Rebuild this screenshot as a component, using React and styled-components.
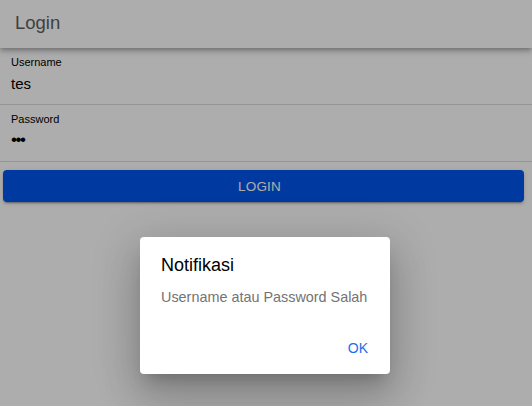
import React from "react";
import styled, { createGlobalStyle } from "styled-components";

const Global = createGlobalStyle`
  html, body { margin: 0; padding: 0; background: #fff; }
  body { font-family: "Liberation Sans", Arial, sans-serif; width: 532px; height: 406px; overflow: hidden; }
  #root { position: relative; height: 406px; }
`;

const Page = styled.div`
  display: flex;
  flex-direction: column;
  height: 406px;
  background: #fff;
`;

const Header = styled.header`
  height: 48px;
  display: flex;
  align-items: center;
  padding-left: 15px;
  background: #fff;
  box-shadow: 0 2px 4px -1px rgba(0,0,0,0.2), 0 4px 5px 0 rgba(0,0,0,0.14), 0 1px 10px 0 rgba(0,0,0,0.12);
  position: relative;
  z-index: 1;
`;

const Title = styled.h1`
  margin: 0 0 2px 0;
  font-size: 18.5px;
  font-weight: 400;
  color: #5e5e5e;
`;

const Content = styled.main`
  display: flex;
  flex-direction: column;
`;

const Field = styled.div`
  height: 57px;
  border-bottom: 1px solid #dcdcdc;
  padding-left: 11px;
  display: flex;
  flex-direction: column;
  box-sizing: border-box;
`;

const Label = styled.span`
  font-size: 11px;
  color: #000;
  margin-top: 8px;
  line-height: 12px;
`;

const Value = styled.span`
  font-size: ${p => (p.$secret ? "17px" : "15px")};
  color: #000;
  margin-top: ${p => (p.$secret ? "6px" : "7px")};
  line-height: 18px;
  letter-spacing: ${p => (p.$secret ? "-1.5px" : "0")};
`;

const Button = styled.button`
  margin: 8px 8px 0 3px;
  height: 32px;
  border: none;
  border-radius: 4px;
  background: #0054eb;
  color: #fff;
  padding: 0 8px 0 0;
  font-family: inherit;
  font-size: 13.5px;
  letter-spacing: 0.2px;
  box-shadow: 0 3px 1px -2px rgba(0,0,0,0.2), 0 2px 2px 0 rgba(0,0,0,0.14), 0 1px 5px 0 rgba(0,0,0,0.12);
`;

const Backdrop = styled.div`
  position: absolute;
  inset: 0;
  background: rgba(0,0,0,0.32);
  display: flex;
  justify-content: center;
  align-items: flex-start;
  padding-top: 237px;
  box-sizing: border-box;
  z-index: 5;
`;

const Dialog = styled.div`
  width: 250px;
  height: 137px;
  margin-left: -2px;
  background: #fff;
  border-radius: 4px;
  box-sizing: border-box;
  display: flex;
  flex-direction: column;
  box-shadow: 0 11px 15px -7px rgba(0,0,0,0.2), 0 24px 38px 3px rgba(0,0,0,0.14), 0 9px 46px 8px rgba(0,0,0,0.12);
`;

const DialogTitle = styled.h2`
  margin: 18px 0 0 21px;
  font-size: 18px;
  font-weight: 400;
  color: #000;
  line-height: 20px;
`;

const Message = styled.p`
  margin: 13px 0 0 21px;
  font-size: 14.4px;
  color: #737373;
  line-height: 18px;
`;

const Actions = styled.div`
  margin-top: auto;
  display: flex;
  justify-content: flex-end;
  padding: 0 22px 18px 0;
`;

const OkButton = styled.button`
  border: none;
  background: none;
  padding: 0;
  font-family: inherit;
  font-size: 14px;
  color: #1a6ef0;
`;

export default function App() {
  return (
    <>
      <Global />
      <Page>
        <Header>
          <Title>Login</Title>
        </Header>
        <Content>
          <Field>
            <Label>Username</Label>
            <Value>tes</Value>
          </Field>
          <Field>
            <Label>Password</Label>
            <Value $secret>•••</Value>
          </Field>
          <Button>LOGIN</Button>
        </Content>
      </Page>
      <Backdrop>
        <Dialog>
          <DialogTitle>Notifikasi</DialogTitle>
          <Message>Username atau Password Salah</Message>
          <Actions>
            <OkButton>OK</OkButton>
          </Actions>
        </Dialog>
      </Backdrop>
    </>
  );
}
